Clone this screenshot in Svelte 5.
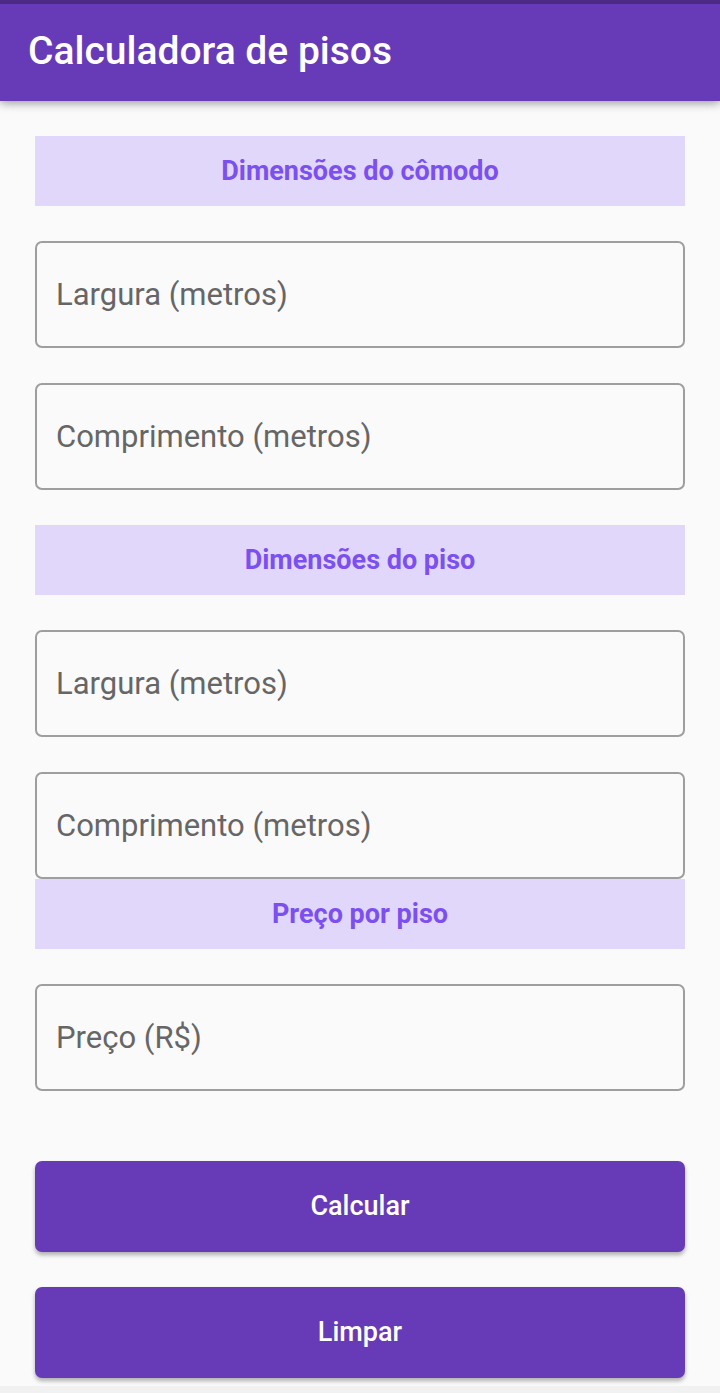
<script>
  let roomWidth = $state('');
  let roomLength = $state('');
  let tileWidth = $state('');
  let tileLength = $state('');
  let price = $state('');
  let result = $state('');

  const num = (v) => parseFloat(v.replace(',', '.'));

  function calculate(event) {
    event.preventDefault();
    const tiles = Math.ceil((num(roomWidth) * num(roomLength)) / (num(tileWidth) * num(tileLength)));
    const total = tiles * num(price);
    result = Number.isFinite(total) ? `${tiles} pisos: R$ ${total.toFixed(2)}` : '';
  }

  function clear() {
    roomWidth = roomLength = tileWidth = tileLength = price = result = '';
  }
</script>

<div class="page">
  <header><h1>Calculadora de pisos</h1></header>
  <form onsubmit={calculate}>
    <section>
      <h2>Dimensões do cômodo</h2>
      <input aria-label="Largura do cômodo" placeholder="Largura (metros)" inputmode="decimal" bind:value={roomWidth} />
      <input aria-label="Comprimento do cômodo" placeholder="Comprimento (metros)" inputmode="decimal" bind:value={roomLength} />
    </section>
    <section class="tile">
      <h2>Dimensões do piso</h2>
      <input aria-label="Largura do piso" placeholder="Largura (metros)" inputmode="decimal" bind:value={tileWidth} />
      <input aria-label="Comprimento do piso" placeholder="Comprimento (metros)" inputmode="decimal" bind:value={tileLength} />
    </section>
    <section>
      <h2>Preço por piso</h2>
      <input aria-label="Preço" placeholder="Preço (R$)" inputmode="decimal" bind:value={price} />
    </section>
    <div class="actions">
      <button type="submit">Calcular</button>
      <button type="button" onclick={clear}>Limpar</button>
    </div>
    {#if result}<output>{result}</output>{/if}
  </form>
  <footer></footer>
</div>

<style>
  :global(body) {
    margin: 0;
    background: #fafafa;
  }
  .page {
    font-family: Roboto, sans-serif;
  }
  header {
    padding: 24px 28px 27px;
    background: #673ab7;
    border-top: 4px solid #4c2a86;
    box-shadow: 0 2px 9px rgba(0, 0, 0, 0.4);
  }
  h1 {
    margin: 0;
    color: #fff;
    font-size: 39px;
    line-height: 46px;
    font-weight: 500;
  }
  form {
    padding: 35px 35px 8px;
  }
  section {
    display: grid;
    gap: 35px;
  }
  .tile {
    margin-top: 35px;
  }
  h2 {
    margin: 0;
    background: #e1d7fa;
    color: #7c50f0;
    font-size: 27px;
    line-height: 70px;
    font-weight: 700;
    text-align: center;
  }
  input {
    box-sizing: border-box;
    width: 100%;
    height: 107px;
    padding: 0 19px;
    border: 2px solid #9e9e9e;
    border-radius: 7px;
    background: transparent;
    color: #212121;
    font: 400 31px/36px Roboto, sans-serif;
  }
  input::placeholder {
    color: #666;
    opacity: 1;
  }
  .actions {
    display: grid;
    gap: 35px;
    margin-top: 70px;
  }
  button {
    height: 91px;
    padding: 0 28px 2px;
    border: 0;
    border-radius: 7px;
    background: #673ab7;
    color: #fff;
    font: 500 27px/32px Roboto, sans-serif;
    box-shadow: 0 3px 4px rgba(0, 0, 0, 0.3);
  }
  output {
    display: block;
    margin-top: 35px;
    font-size: 27px;
    text-align: center;
  }
  footer {
    height: 7px;
    background: #f1f1f1;
  }
</style>
